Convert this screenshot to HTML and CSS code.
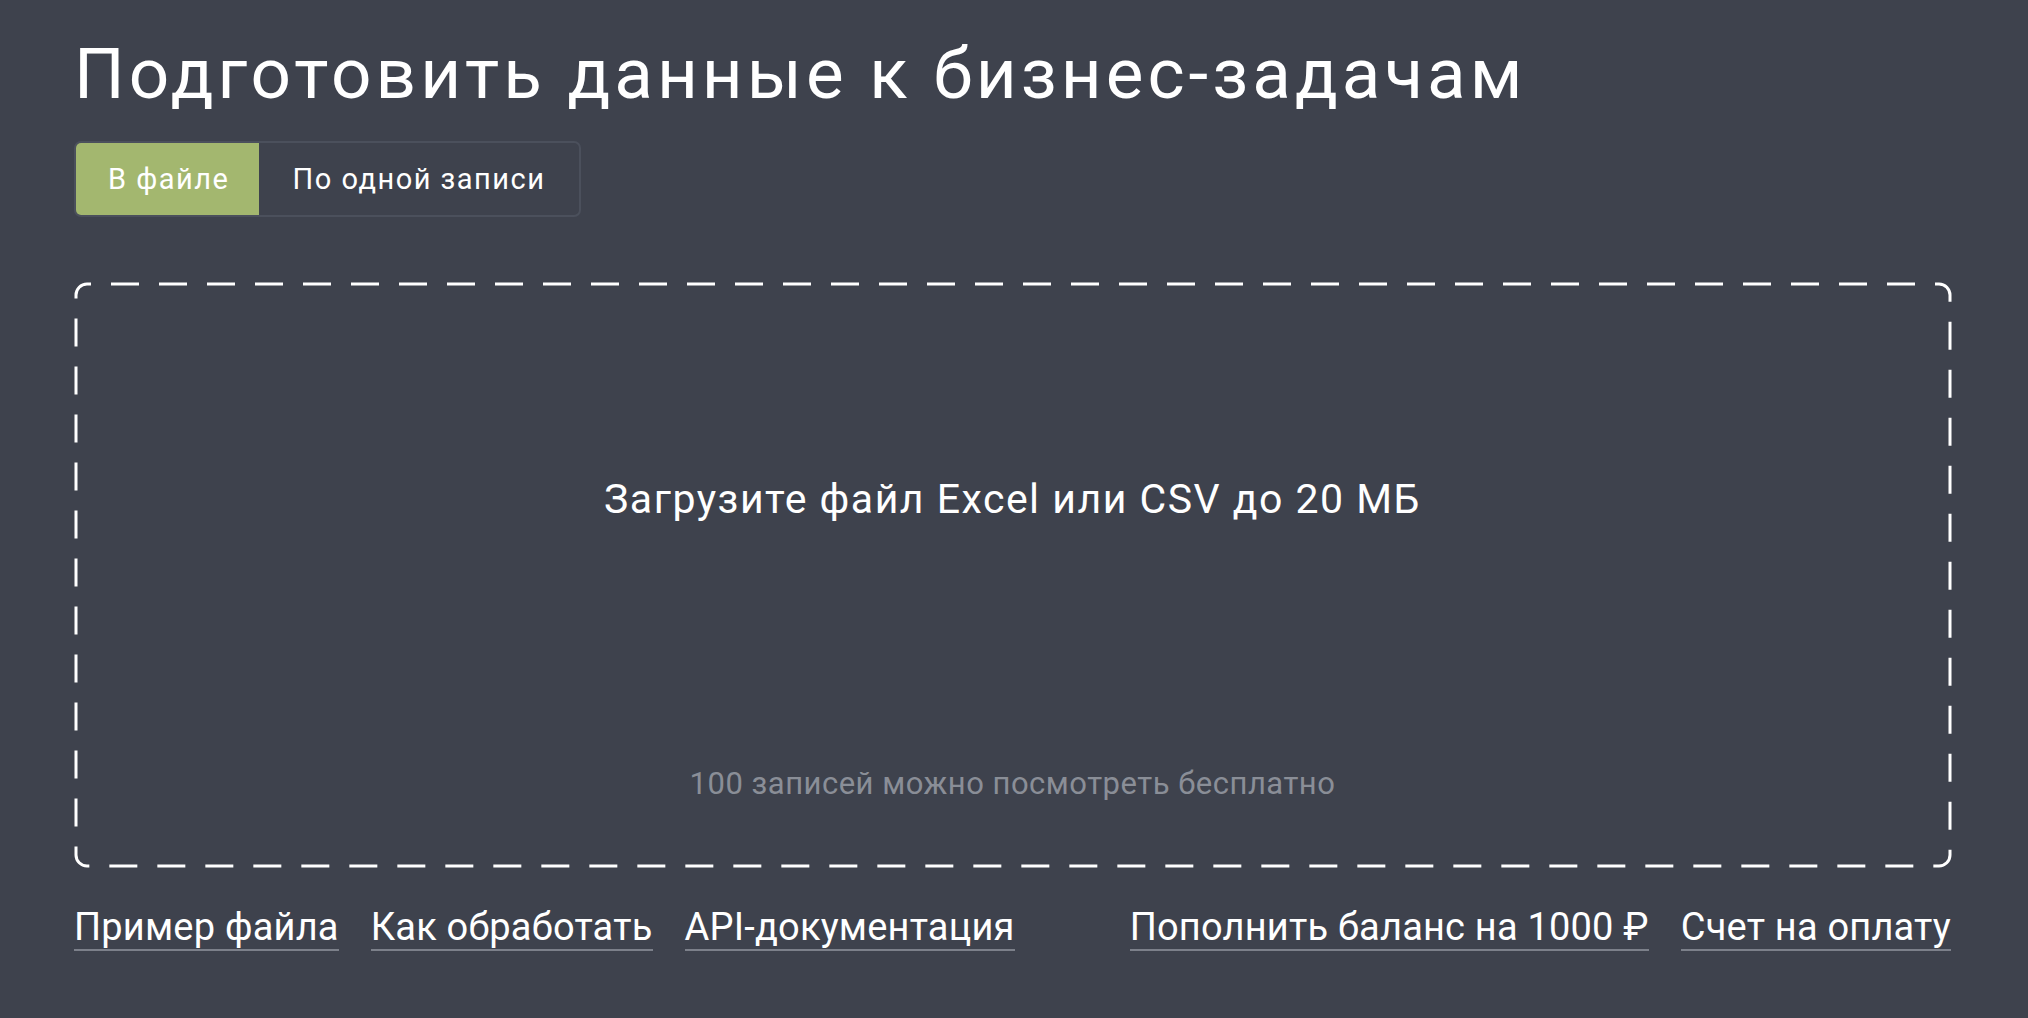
FILE: index.html
```html
<!DOCTYPE html>
<html lang="ru">
<head>
<meta charset="utf-8">
<title>Подготовить данные к бизнес-задачам</title>
<link rel="stylesheet" href="styles.css">
</head>
<body>
<main class="page">
  <h1 class="title">Подготовить данные к бизнес-задачам</h1>
  <div class="toggle">
    <button class="toggle-btn active" type="button">В файле</button>
    <button class="toggle-btn" type="button">По одной записи</button>
  </div>
  <section class="dropzone">
    <svg class="dash" aria-hidden="true"><rect class="dash-rect" x="0" y="0" width="100%" height="100%" rx="11" ry="11"/></svg>
    <p class="drop-main">Загрузите файл Excel или CSV до 20&nbsp;МБ</p>
    <p class="drop-sub">100 записей можно посмотреть бесплатно</p>
  </section>
  <nav class="links">
    <div class="link-group">
      <a class="link" href="#">Пример файла</a>
      <a class="link" href="#">Как обработать</a>
      <a class="link" href="#">API-документация</a>
    </div>
    <div class="link-group">
      <a class="link" href="#">Пополнить баланс на 1000 ₽</a>
      <a class="link" href="#">Счет на оплату</a>
    </div>
  </nav>
</main>
</body>
</html>
```
FILE: styles.css
```css
html, body {
  margin: 0;
  padding: 0;
  background: #3e424d;
}
body {
  font-family: Roboto, "Noto Sans", "Liberation Sans", sans-serif;
  color: #ffffff;
  min-height: 1018px;
}
.page {
  width: 1877px;
  margin-left: 74px;
  padding-top: 32px;
}
.title {
  margin: 0;
  font-family: Roboto, "Noto Sans", sans-serif;
  font-weight: 400;
  font-size: 71px;
  line-height: 84px;
  letter-spacing: 4px;
  color: #ffffff;
  white-space: nowrap;
}
.toggle {
  margin-top: 25px;
  display: inline-flex;
  height: 76px;
  box-sizing: border-box;
  border: 2px solid #4b505c;
  border-radius: 7px;
  overflow: hidden;
}
.toggle-btn {
  border: 0;
  margin: 0;
  background: transparent;
  color: #ffffff;
  font-family: Roboto, "Noto Sans", sans-serif;
  font-size: 29px;
  line-height: 34px;
  letter-spacing: 1.5px;
  padding: 0 33px 0 33px;
  cursor: pointer;
}
.toggle-btn.active {
  background: #a3b76f;
  padding: 0 30px 0 32px;
}
.dropzone {
  position: relative;
  margin-top: 65px;
  padding: 193px 0 65px;
  display: flex;
  flex-direction: column;
  align-items: center;
}
.dash {
  position: absolute;
  left: 1.5px;
  top: 1.5px;
  width: calc(100% - 3px);
  height: calc(100% - 3px);
  overflow: visible;
  pointer-events: none;
}
.dash-rect {
  fill: none;
  stroke: #ffffff;
  stroke-width: 3;
  stroke-dasharray: 28 20;
  stroke-dashoffset: 24;
}
.drop-main {
  margin: 0;
  font-size: 41px;
  line-height: 48px;
  letter-spacing: 1.5px;
  color: #ffffff;
}
.drop-sub {
  margin: 243px 0 0;
  font-size: 31px;
  line-height: 36px;
  letter-spacing: 0.5px;
  color: #8a8e97;
}
.links {
  margin-top: 38px;
  display: flex;
  justify-content: space-between;
}
.link-group {
  display: flex;
  gap: 32px;
}
.link {
  display: inline-block;
  font-size: 38px;
  line-height: 44px;
  letter-spacing: 0.2px;
  color: #ffffff;
  text-decoration: none;
  border-bottom: 2px solid #7c808a;
}
```
